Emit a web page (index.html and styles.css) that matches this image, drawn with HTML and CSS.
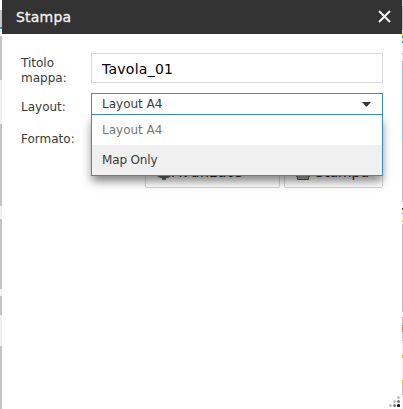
FILE: index.html
```
<!DOCTYPE html>
<html lang="it">
<head>
<meta charset="utf-8">
<title>Stampa</title>
<link rel="stylesheet" href="styles.css">
</head>
<body>
<main class="panel">
  <header class="header">
    <span class="title">Stampa</span>
    <svg class="close" width="13" height="13" viewBox="0 0 13 13"><path d="M1 1l11 11M12 1L1 12"/></svg>
  </header>
  <form class="form">
    <div class="row row-title">
      <label class="label">Titolo<br>mappa:</label>
      <div class="input">Tavola_01</div>
    </div>
    <div class="row row-layout">
      <label class="label">Layout:</label>
      <div class="select">
        <span>Layout A4</span>
        <svg class="arrow" width="9" height="5" viewBox="0 0 9 5"><path d="M0 0h9L5 4.5H4z"/></svg>
        <div class="menu">
          <div class="option muted">Layout A4</div>
          <div class="option active">Map Only</div>
        </div>
      </div>
    </div>
    <div class="row row-format"><label class="label">Formato:</label></div>
    <div class="actions">
      <div class="button advanced">
        <svg width="14" height="14" viewBox="0 0 14 14"><path fill="#65696b" d="M5 0h4v2l3-1 2 4-2 2 2 3-3 2H9v2H5v-2H3l-3-2 2-3-2-2 2-4 3 1z"/><circle cx="7" cy="7" r="2" fill="#fff"/></svg>
        <span>Avanzate</span>
      </div>
      <div class="button print">
        <svg width="14" height="14" viewBox="0 0 14 14"><path fill="#aaa" stroke="#555" d="M3.500.5h7v5h3v5h-1v3h-11v-3h-1v-5h3z"/></svg>
        <span>Stampa</span>
      </div>
    </div>
  </form>
  <svg class="grip" width="11" height="11" viewBox="0 0 11 11">
    <g fill="#c0c0c0"><circle cx="9.500" cy="1.500" r="1.500"/><circle cx="5.500" cy="5.500" r="1.500"/><circle cx="1.500" cy="9.500" r="1.500"/></g>
    <g fill="#777"><circle cx="9.500" cy="5.500" r="1.500"/><circle cx="5.500" cy="9.500" r="1.500"/></g>
    <circle cx="9.500" cy="9.500" r="1.600" fill="#111"/>
  </svg>
</main>
</body>
</html>
```
FILE: styles.css
```
* { box-sizing: border-box; }
body {
  margin: 0;
  width: 403px;
  height: 409px;
  overflow: hidden;
  font: 12px/15px "DejaVu Sans", Verdana, sans-serif;
  color: #3a3a3a;
  /* slivers of the map on either side of the panel */
  background:
    linear-gradient(#fff 10px, #c6c6c6 10px 27px, #1a9dd0 27px 29px, #fff 29px 36px, #c4c4c4 36px 80px, #f0f0f0 80px 124px, #c4c4c4 124px 206px, #f0f0f0 206px 219px, #c4c4c4 219px 289px, #f0f0f0 289px 296px, #c4c4c4 296px 315px, #f0f0f0 315px 346px, #c4c4c4 346px) 0 0 / 2px 100% no-repeat,
    linear-gradient(#ddd 6px, #bbb 6px 30px, #eee 30px 33px, #e5d500 33px 36px, #1a9dd0 36px 38px, #e6b83c 38px 39px, #eee 39px 41px, #1a9dd0 41px 43px, #eee 43px 53px, #bbb 53px 55px, #eee 55px 61px, #bbb 61px 70px, #86cfec 70px 140px, #bdbdbd 140px 202px, #eee 202px 208px, #555 208px 210px, #eee 210px 213px, #999 213px 214px, #eee 214px 220px, #d4d425 220px 222px, #eee 222px 224px, #bdbdbd 224px 234px, #bdbdbd 234px 312px, #eee 312px 317px, #f0a8b5 317px 320px, #bbb 320px 325px, #df6d82 325px 332px, #c6c6c6 332px 341px, #eee 341px 355px, #c9d41d 355px 358px, #eee 358px 380px, #c9d41d 380px 383px, #c0c0c0 383px 395px, #eee 395px) 402px 0 / 1px 100% no-repeat,
    #fff;
}
.panel {
  position: relative;
  width: 400px;
  height: 409px;
  margin-left: 2px;
  background: #fff;
}
.header {
  display: flex;
  align-items: center;
  justify-content: space-between;
  height: 34px;
  padding: 0 11px 0 14px;
  background: #333;
}
.title { font-size: 14px; letter-spacing: .2px; color: #f4f4f4; -webkit-text-stroke: .3px #f4f4f4; }
.close { fill: none; stroke: #f4f4f4; stroke-width: 2; margin-top: -2px; }
.form { padding: 19px 19px 0; }
.row { display: grid; grid-template-columns: 70px 292px; }
.row-title { height: 40px; }
.row-title .label { padding-top: 3px; }
.row-layout { height: 32px; }
.row-layout .label { padding-top: 7px; }
.row-format { height: 29px; }
.row-format .label { padding-top: 7px; }
.input {
  height: 30px;
  padding-left: 10px;
  border: 1px solid #dadada;
  font-size: 14px;
  line-height: 30px;
  letter-spacing: .25px;
  color: #000;
}
.select {
  position: relative;
  display: flex;
  justify-content: space-between;
  height: 22px;
  padding: 0 11px 0 10px;
  border: 1px solid #3a8cc1;
  line-height: 20px;
}
.arrow { fill: #333; margin-top: 8px; }
.menu {
  position: absolute;
  top: 20px;
  left: -1px;
  width: 292px;
  border: 1px solid #3a8cc1;
  background: #fff;
  box-shadow: 0 6px 9px -1px rgba(0, 0, 0, .5);
  clip-path: inset(0 -15px -20px -15px);
}
.option { height: 30px; padding-left: 10px; line-height: 30px; }
.muted { color: #777; }
.active { background: #f0f0f0; letter-spacing: -.15px; }
.actions { display: flex; justify-content: flex-end; gap: 4px; }
.button {
  display: flex;
  align-items: center;
  gap: 1px;
  height: 34px;
  padding-top: 3px;
  border: 1px solid #d5d5d5;
  border-radius: 2px;
  font-size: 14px;
  color: #222;
}
.advanced { width: 135px; padding-left: 11px; }
.advanced span { letter-spacing: .8px; }
.print { width: 99px; padding-left: 11px; gap: 5px; }
.grip { position: absolute; right: 2px; bottom: 2px; }
```
